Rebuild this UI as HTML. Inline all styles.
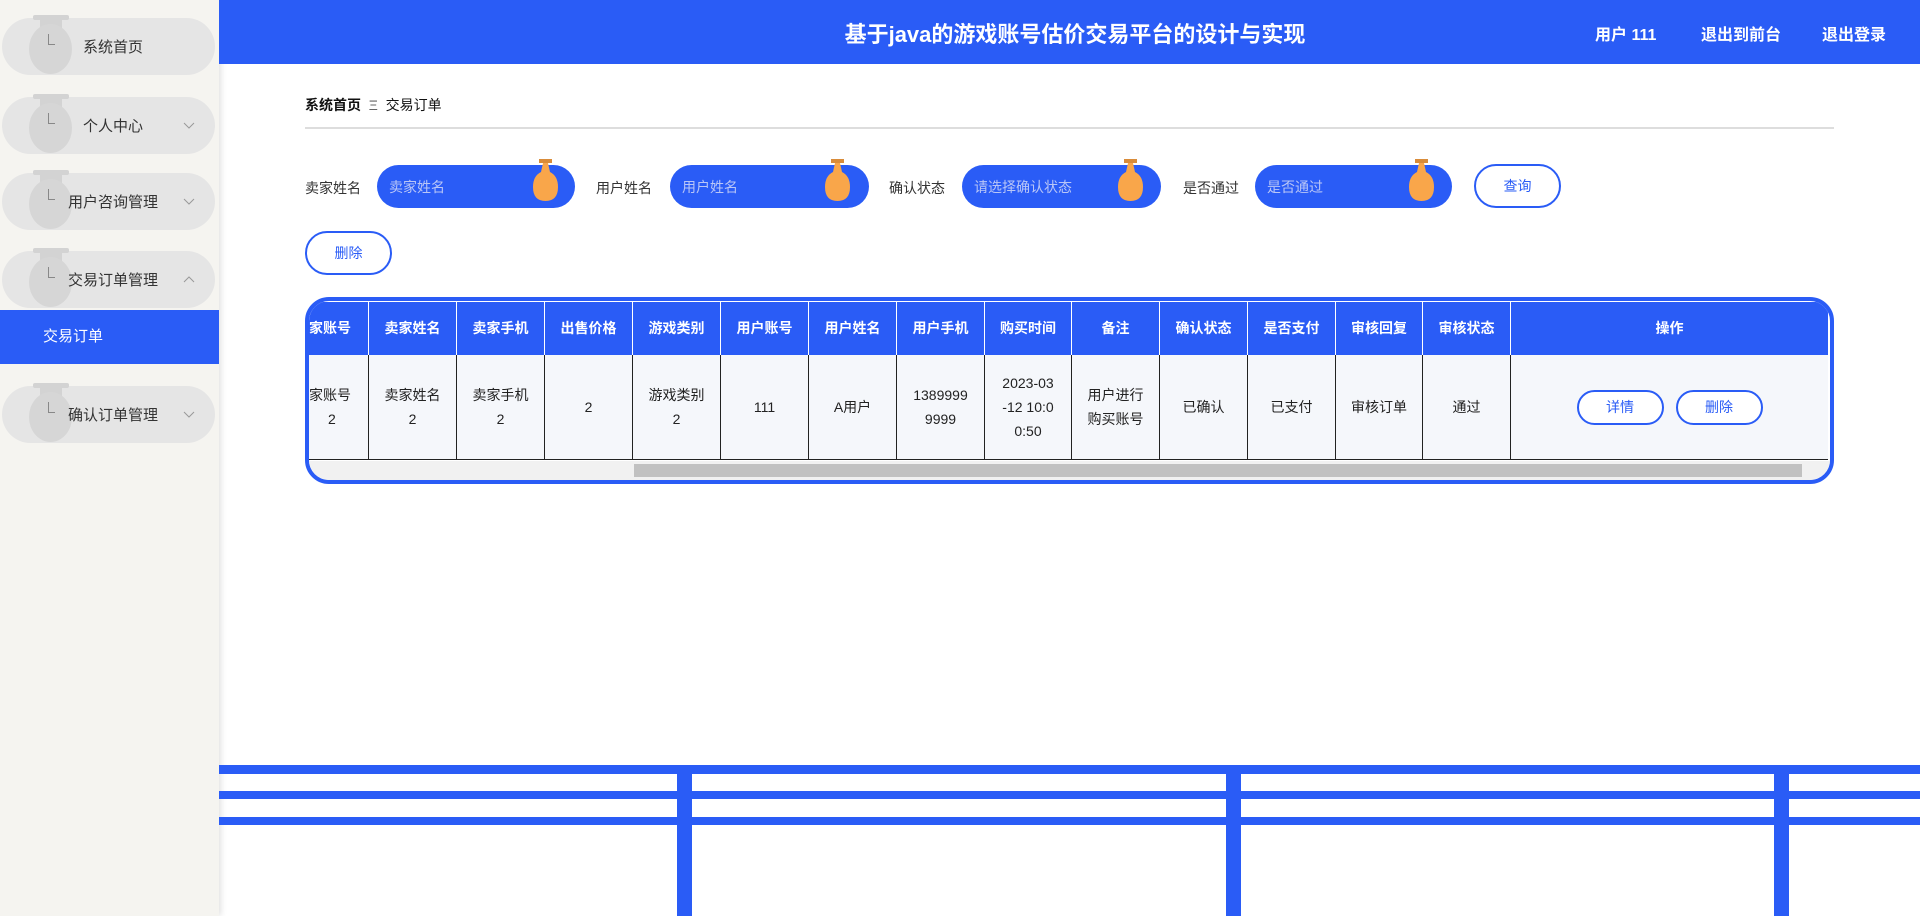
<!DOCTYPE html>
<html><head><meta charset="utf-8">
<style>
*{margin:0;padding:0;box-sizing:border-box}
body{width:1920px;height:916px;overflow:hidden;background:#fff;font-family:"Liberation Sans","Noto Sans CJK SC",sans-serif;position:relative;color:#333}
.abs{position:absolute}
#side{left:0;top:0;width:219px;height:916px;background:#f5f4f0;box-shadow:2px 0 6px rgba(0,0,0,.12)}
.pill{position:absolute;left:2px;width:213px;height:57px;border-radius:29px;background:#e5e5e5}
.pill .t{position:absolute;left:31px;top:-3px;width:36px;height:5px;background:#d3d3d3;border-radius:2px}
.pill .s{position:absolute;left:38px;top:0;width:22px;height:18px;background:#d3d3d3}
.pill .c{position:absolute;left:27px;top:6px;width:43px;height:50px;border-radius:50%;background:#d6d6d6}
.pill .l{position:absolute;left:46px;top:16px;width:7px;height:11px;border-left:1px solid #888;border-bottom:1px solid #888}
.pill .x{position:absolute;top:18px;font-size:15px;color:#333}
.pill svg.ch{position:absolute;left:181px;top:25px}
#hdr{left:219px;top:0;width:1701px;height:64px;background:#2a5cf6;color:#fff;font-weight:bold}
.lbl{position:absolute;top:178px;font-size:14px;color:#333}
.inp{position:absolute;top:165px;height:43px;border-radius:22px;background:#2a5cf6;color:#b9c6f7;font-size:14px;padding:12px 0 0 12px}
.drop{position:absolute;top:-6px;width:25px;height:44px}
.btn{position:absolute;height:44px;border:2px solid #2a5cf6;border-radius:22px;color:#2a5cf6;font-size:14px;text-align:center;line-height:40px;background:#fff}
#tbl{left:305px;top:297px;width:1529px;height:187px;border:4px solid #2a5cf6;border-radius:24px;overflow:hidden;background:#fff}
.row{position:absolute;left:0;display:flex}
.hd div{height:53px;background:#2a5cf6;color:#fff;font-weight:bold;font-size:14px;text-align:center;line-height:53px;border-right:1px solid #fff;white-space:nowrap;overflow:hidden}
.bd div{height:105px;background:#f5f7fb;color:#222;font-size:14px;text-align:center;border-right:1px solid #222;display:flex;align-items:center;justify-content:center;line-height:24px;border-bottom:1.5px solid #222}
.bar{position:absolute;background:#2a5cf6}
</style></head><body>
<div id="side" class="abs">
 <div class="pill" style="top:18px"><div class="t"></div><div class="s"></div><div class="c"></div><div class="l"></div><span class="x" style="left:81px">系统首页</span></div>
 <div class="pill" style="top:97px"><div class="t"></div><div class="s"></div><div class="c"></div><div class="l"></div><span class="x" style="left:81px">个人中心</span><svg class="ch" width="12" height="7" viewBox="0 0 12 7"><path d="M1 1l5 5 5-5" fill="none" stroke="#999" stroke-width="1"/></svg></div>
 <div class="pill" style="top:173px"><div class="t"></div><div class="s"></div><div class="c"></div><div class="l"></div><span class="x" style="left:66px">用户咨询管理</span><svg class="ch" width="12" height="7" viewBox="0 0 12 7"><path d="M1 1l5 5 5-5" fill="none" stroke="#999" stroke-width="1"/></svg></div>
 <div class="pill" style="top:251px"><div class="t"></div><div class="s"></div><div class="c"></div><div class="l"></div><span class="x" style="left:66px">交易订单管理</span><svg class="ch" width="12" height="7" viewBox="0 0 12 7"><path d="M1 6l5-5 5 5" fill="none" stroke="#999" stroke-width="1"/></svg></div>
 <div class="abs" style="left:0;top:310px;width:219px;height:54px;background:#2a5cf6;color:#fff;font-size:15px;line-height:54px;padding-left:43px">交易订单</div>
 <div class="pill" style="top:386px"><div class="t"></div><div class="s"></div><div class="c"></div><div class="l"></div><span class="x" style="left:66px">确认订单管理</span><svg class="ch" width="12" height="7" viewBox="0 0 12 7"><path d="M1 1l5 5 5-5" fill="none" stroke="#999" stroke-width="1"/></svg></div>
</div>
<div id="hdr" class="abs">
 <div class="abs" style="left:0;width:1712px;top:17px;text-align:center;font-size:22px">基于java的游戏账号估价交易平台的设计与实现</div>
 <div class="abs" style="left:1376px;top:21px;font-size:16px">用户 111</div>
 <div class="abs" style="left:1482px;top:21px;font-size:16px">退出到前台</div>
 <div class="abs" style="left:1603px;top:21px;font-size:16px">退出登录</div>
</div>
<div class="abs" style="left:305px;top:95px;font-size:14px;color:#111"><b>系统首页</b>&nbsp;&nbsp;<span style="color:#666">Ξ</span>&nbsp;&nbsp;交易订单</div>
<div class="abs" style="left:305px;top:127px;width:1529px;height:2px;background:#ddd"></div>

<span class="lbl" style="left:305px">卖家姓名</span>
<div class="inp" style="left:377px;width:198px">卖家姓名<svg class="drop" style="left:156px" viewBox="0 0 25 44"><rect x="6" y="0" width="13" height="4" fill="#d98c3a"/><path d="M10 4h5l2 9q8 4 8 15q0 14-12.5 14t-12.5-14q0-11 8-15z" fill="#f9a64a"/></svg></div>
<span class="lbl" style="left:596px">用户姓名</span>
<div class="inp" style="left:670px;width:199px">用户姓名<svg class="drop" style="left:155px" viewBox="0 0 25 44"><rect x="6" y="0" width="13" height="4" fill="#d98c3a"/><path d="M10 4h5l2 9q8 4 8 15q0 14-12.5 14t-12.5-14q0-11 8-15z" fill="#f9a64a"/></svg></div>
<span class="lbl" style="left:889px">确认状态</span>
<div class="inp" style="left:962px;width:199px">请选择确认状态<svg class="drop" style="left:156px" viewBox="0 0 25 44"><rect x="6" y="0" width="13" height="4" fill="#d98c3a"/><path d="M10 4h5l2 9q8 4 8 15q0 14-12.5 14t-12.5-14q0-11 8-15z" fill="#f9a64a"/></svg></div>
<span class="lbl" style="left:1183px">是否通过</span>
<div class="inp" style="left:1255px;width:197px">是否通过<svg class="drop" style="left:154px" viewBox="0 0 25 44"><rect x="6" y="0" width="13" height="4" fill="#d98c3a"/><path d="M10 4h5l2 9q8 4 8 15q0 14-12.5 14t-12.5-14q0-11 8-15z" fill="#f9a64a"/></svg></div>
<div class="btn" style="left:1474px;top:164px;width:87px">查询</div>
<div class="btn" style="left:305px;top:231px;width:87px">删除</div>

<div id="tbl" class="abs">
 <div class="row hd" style="top:1px">
  <div style="width:60px;text-align:left">家账号</div><div style="width:88px">卖家姓名</div><div style="width:88px">卖家手机</div><div style="width:88px">出售价格</div><div style="width:88px">游戏类别</div><div style="width:88px">用户账号</div><div style="width:88px">用户姓名</div><div style="width:88px">用户手机</div><div style="width:87px">购买时间</div><div style="width:88px">备注</div><div style="width:88px">确认状态</div><div style="width:88px">是否支付</div><div style="width:87px">审核回复</div><div style="width:88px">审核状态</div><div style="width:317px;border-right:none">操作</div>
 </div>
 <div class="row bd" style="top:54px">
  <div style="width:60px;justify-content:flex-start">家账号<br>&nbsp;2</div><div style="width:88px">卖家姓名<br>2</div><div style="width:88px">卖家手机<br>2</div><div style="width:88px">2</div><div style="width:88px">游戏类别<br>2</div><div style="width:88px">111</div><div style="width:88px">A用户</div><div style="width:88px">1389999<br>9999</div><div style="width:87px">2023-03<br>-12 10:0<br>0:50</div><div style="width:88px">用户进行<br>购买账号</div><div style="width:88px">已确认</div><div style="width:88px">已支付</div><div style="width:87px">审核订单</div><div style="width:88px">通过</div><div style="width:317px;border-right:none;gap:12px"><span class="btn" style="position:static;display:inline-block;width:87px;height:35px;line-height:31px">详情</span><span class="btn" style="position:static;display:inline-block;width:87px;height:35px;line-height:31px">删除</span></div>
 </div>
 <div class="abs" style="left:0;top:160px;width:1525px;height:19px;background:#f1f1f1"></div>
 <div class="abs" style="left:325px;top:163px;width:1168px;height:13px;background:#c1c1c1"></div>
</div>

<div class="bar" style="left:219px;top:765px;width:1701px;height:9px"></div>
<div class="bar" style="left:219px;top:791px;width:1701px;height:8px"></div>
<div class="bar" style="left:219px;top:817px;width:1701px;height:8px"></div>
<div class="bar" style="left:677px;top:765px;width:15px;height:151px"></div>
<div class="bar" style="left:1226px;top:765px;width:15px;height:151px"></div>
<div class="bar" style="left:1774px;top:765px;width:15px;height:151px"></div>
</body></html>
